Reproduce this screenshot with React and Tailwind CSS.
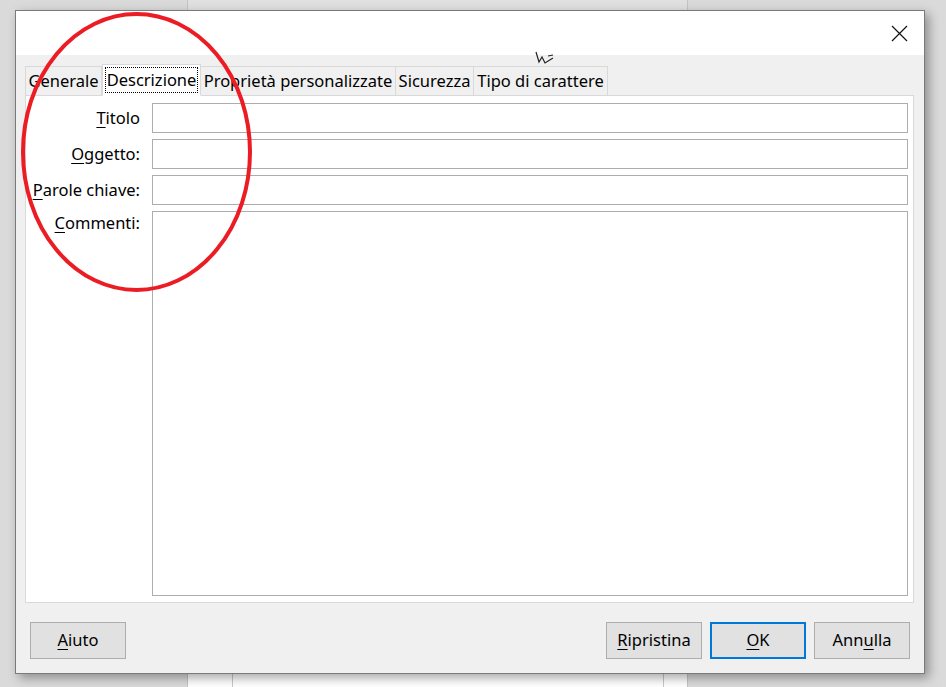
import React from "react";

const font = { fontFamily: '"Noto Sans", "Open Sans", sans-serif' };

function Tab({ children, selected, w }) {
  if (selected) {
    return (
      <div className={`relative z-10 -mb-px ${w} h-[32px] bg-white border border-[#d9d9d9] border-b-white flex items-center justify-center px-[2px]`}>
        <div className="border border-dotted border-black h-[26px] flex items-center px-[1px] leading-none">
          {children}
        </div>
      </div>
    );
  }
  return (
    <div className={`${w} h-[29px] bg-[#f0f0f0] border border-[#d9d9d9] border-b-0 -ml-px flex items-center justify-center leading-none`}>
      {children}
    </div>
  );
}

function Btn({ children, primary, w = "w-[96px]" }) {
  return (
    <div
      className={`${w} h-[37px] bg-[#e1e1e1] flex items-center justify-center text-[16.5px] text-black ${
        primary ? "border-2 border-[#0078d7]" : "border border-[#adadad]"
      }`}
    >
      {children}
    </div>
  );
}

export default function App() {
  return (
    <div className="relative w-[946px] h-[687px] bg-[#dadada] overflow-hidden" style={font}>
      {/* window behind */}
      <div className="absolute left-[187px] top-0 w-[501px] h-[687px] bg-[#e0e0e0] border-x border-[#c4c4c4]" />
      <div className="absolute left-[188px] top-[674px] w-[499px] h-[13px] bg-white flex">
        <div className="w-[45px] border-r border-[#c8c8c8]" />
        <div className="flex-1 border-r border-[#c8c8c8] mr-[23px]" />
      </div>

      {/* dialog */}
      <div className="absolute left-[15px] top-[10px] w-[910px] h-[664px] border border-[#7a7a7a] shadow-[4px_4px_10px_rgba(0,0,0,0.35)] flex flex-col bg-[#f0f0f0]">
        <div className="h-[44px] bg-white flex justify-end items-start">
          <svg width="17" height="17" viewBox="0 0 17 17" className="mt-[14px] mr-[16px]">
            <path d="M1 1 L16 16 M16 1 L1 16" stroke="#111" strokeWidth="1.2" />
          </svg>
        </div>
        <div className="flex-1 flex flex-col pt-[8px] pl-[9px] pr-[10px]">
          <div className="flex items-end h-[32px] pl-[1px] text-[16.5px] text-black">
            <Tab w="w-[77px]">Generale</Tab>
            <Tab selected w="w-[99px]">Descrizione</Tab>
            <Tab w="w-[196px]">Proprietà personalizzate</Tab>
            <Tab w="w-[79px]">Sicurezza</Tab>
            <Tab w="w-[135px]">Tipo di carattere</Tab>
          </div>
          <div className="h-[508px] bg-white border border-[#d9d9d9] pt-[7px] pr-[5px] pb-[6px] flex flex-col gap-[6px] text-[16.5px] text-black">
            <div className="flex items-center gap-[12px]">
              <div className="w-[114px] text-right whitespace-nowrap">
                <u className="underline-offset-[3px]">T</u>itolo
              </div>
              <div className="flex-1 h-[30px] border border-[#adadad]" />
            </div>
            <div className="flex items-center gap-[12px]">
              <div className="w-[114px] text-right whitespace-nowrap">
                <u className="underline-offset-[3px]">O</u>ggetto:
              </div>
              <div className="flex-1 h-[30px] border border-[#adadad]" />
            </div>
            <div className="flex items-center gap-[12px]">
              <div className="w-[114px] text-right whitespace-nowrap">
                <u className="underline-offset-[3px]">P</u>arole chiave:
              </div>
              <div className="flex-1 h-[30px] border border-[#adadad]" />
            </div>
            <div className="flex-1 flex items-start gap-[12px]">
              <div className="w-[114px] text-right leading-[24px] whitespace-nowrap">
                <u className="underline-offset-[3px]">C</u>ommenti:
              </div>
              <div className="flex-1 self-stretch border border-[#adadad]" />
            </div>
          </div>
          <div className="flex items-center mt-[19px] pl-[5px] pr-[4px]">
            <Btn>
              <span><u className="underline-offset-[3px]">A</u>iuto</span>
            </Btn>
            <div className="flex-1" />
            <div className="flex gap-[8px]">
              <Btn>
                <span><u className="underline-offset-[3px]">R</u>ipristina</span>
              </Btn>
              <Btn primary>
                <span><u className="underline-offset-[3px]">O</u>K</span>
              </Btn>
              <Btn>
                <span>Ann<u className="underline-offset-[3px]">u</u>lla</span>
              </Btn>
            </div>
          </div>
        </div>
      </div>

      {/* cursor + annotation */}
      <svg className="absolute left-0 top-0" width="946" height="687" style={{ pointerEvents: "none" }}>
        <path d="M536 52 L539 62 L542 57 L545 63 L553 58 M548 56 L553 55" fill="none" stroke="#222" strokeWidth="1.2" />
        <ellipse cx="136.5" cy="152" rx="113.5" ry="138" fill="none" stroke="#ec1c24" strokeWidth="4" />
      </svg>
    </div>
  );
}
